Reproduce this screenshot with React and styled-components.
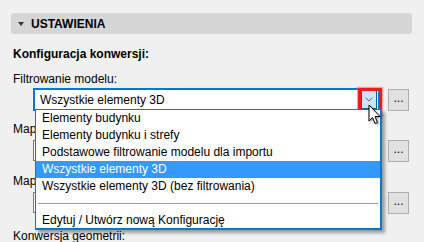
import React from "react";
import styled, { createGlobalStyle } from "styled-components";

const GlobalStyle = createGlobalStyle`
  html, body {
    margin: 0;
    padding: 0;
    background: #f0f0f0;
  }
  body {
    font-family: "Liberation Sans", Arial, sans-serif;
    font-size: 12px;
    color: #000;
    overflow: hidden;
  }
`;

const Page = styled.div`
  position: relative;
  width: 424px;
  height: 242px;
  padding: 13px 12px 0 11px;
  box-sizing: border-box;
  overflow: hidden;
`;

const SectionHeader = styled.div`
  display: flex;
  align-items: center;
  gap: 7px;
  height: 21px;
  padding-left: 7px;
  border-radius: 3px;
  background: #d6d6d6;
  font-weight: 700;
  font-size: 12px;
`;

const Caret = styled.span`
  width: 0;
  height: 0;
  border-left: 3.5px solid transparent;
  border-right: 3.5px solid transparent;
  border-top: 4px solid #333;
  margin-top: 1px;
`;

const Body = styled.div`
  padding: 12px 0 0 2px;
`;

const Label = styled.div`
  height: 16px;
  line-height: 16px;
  font-weight: ${(p) => (p.$bold ? 700 : 400)};
  margin-bottom: ${(p) => p.$mb || 0}px;
  white-space: nowrap;
`;

const Row = styled.div`
  position: relative;
  display: flex;
  align-items: center;
  gap: 8px;
  margin-left: 20px;
  height: ${(p) => p.$h}px;
  margin-bottom: ${(p) => p.$mb || 0}px;
`;

const Select = styled.div`
  position: relative;
  display: flex;
  align-items: center;
  width: 347px;
  height: 100%;
  box-sizing: border-box;
  border: ${(p) => (p.$open ? "2px solid #0078d7" : "1px solid #7a7a7a")};
  background: #fff;
  padding-left: 5px;
`;

const DropButton = styled.div`
  position: absolute;
  right: 1px;
  top: 0;
  bottom: 0;
  width: 16px;
  box-sizing: border-box;
  border: 1px solid #0f5e9e;
  background: #cce4f7;
  display: flex;
  align-items: center;
  justify-content: center;
`;

const RedMark = styled.div`
  position: absolute;
  left: -4px;
  top: -3px;
  width: 24px;
  height: 28px;
  box-sizing: border-box;
  border: 3px solid #ee1c1c;
  box-shadow: 0 0 1px 1px rgba(255, 80, 80, 0.5);
`;

const DotsButton = styled.div`
  width: 21px;
  height: 22px;
  box-sizing: border-box;
  border: 1px solid #adadad;
  background: #e1e1e1;
  display: flex;
  align-items: center;
  justify-content: center;
  font-size: 12px;
  padding-bottom: 3px;
`;

const List = styled.div`
  position: absolute;
  left: 0;
  top: 100%;
  width: 347px;
  height: 121px;
  box-sizing: border-box;
  border: 1px solid #0078d7;
  border-right-width: 2px;
  border-bottom-width: 2px;
  background: #fff;
  box-shadow: 3px 3px 3px rgba(0, 0, 0, 0.35);
  z-index: 5;
`;

const Item = styled.div`
  height: 17px;
  line-height: 17px;
  padding-left: 6px;
  white-space: nowrap;
  background: ${(p) => (p.$active ? "#3399ff" : "transparent")};
  color: ${(p) => (p.$active ? "#fff" : "#000")};
`;

const Separator = styled.div`
  height: 17px;
  display: flex;
  align-items: center;
  padding: 0 2px;
  &::after {
    content: "";
    flex: 1;
    height: 1px;
    background: #a0a0a0;
  }
`;

const Cursor = styled.svg`
  position: absolute;
  left: 6px;
  top: 13px;
  z-index: 10;
  filter: drop-shadow(1px 1px 1px rgba(0, 0, 0, 0.4));
`;

const items = [
  "Elementy budynku",
  "Elementy budynku i strefy",
  "Podstawowe filtrowanie modelu dla importu",
  "Wszystkie elementy 3D",
  "Wszystkie elementy 3D (bez filtrowania)",
];

export default function App() {
  return (
    <>
      <GlobalStyle />
      <Page>
        <SectionHeader>
          <Caret />
          USTAWIENIA
        </SectionHeader>
        <Body>
          <Label $bold $mb={9}>Konfiguracja konwersji:</Label>
          <Label $mb={1}>Filtrowanie modelu:</Label>
          <Row $h={23} $mb={10}>
            <Select $open>
              Wszystkie elementy 3D
              <DropButton>
                <svg width="8" height="5" viewBox="0 0 8 5">
                  <path d="M0.5 0.5 L4 4 L7.5 0.5" fill="none" stroke="#6b6b6b" strokeWidth="1" />
                </svg>
                <RedMark />
                <Cursor width="14" height="22" viewBox="0 0 14 22">
                  <path
                    d="M1 1 L1 17 L4.5 13.5 L7 19.5 L9.5 18.5 L7 12.5 L12 12.5 Z"
                    fill="#fff"
                    stroke="#000"
                    strokeWidth="1"
                    strokeLinejoin="miter"
                  />
                </Cursor>
              </DropButton>
              <List>
                {items.map((t) => (
                  <Item key={t} $active={t === "Wszystkie elementy 3D"}>
                    {t}
                  </Item>
                ))}
                <Separator />
                <Item>Edytuj / Utwórz nową Konfigurację</Item>
              </List>
            </Select>
            <DotsButton>...</DotsButton>
          </Row>
          <Label $mb={3}>Map</Label>
          <Row $h={21} $mb={12}>
            <Select />
            <DotsButton>...</DotsButton>
          </Row>
          <Label $mb={3}>Map</Label>
          <Row $h={21} $mb={15}>
            <Select />
            <DotsButton>...</DotsButton>
          </Row>
          <Label>Konwersja geometrii:</Label>
        </Body>
      </Page>
    </>
  );
}
